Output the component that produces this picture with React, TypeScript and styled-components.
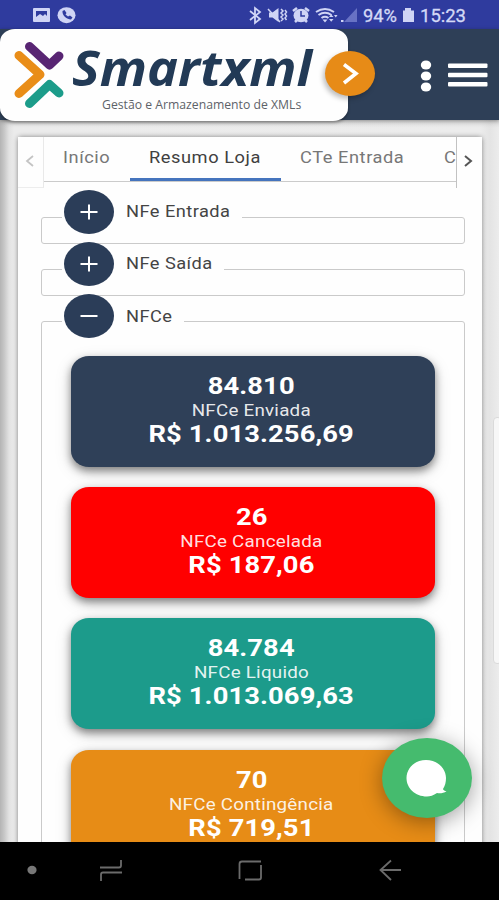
import React from "react";
import styled, { createGlobalStyle } from "styled-components";

const GlobalStyle = createGlobalStyle`
  * { box-sizing: border-box; }
  body { margin: 0; background: #000; font-family: Roboto, "Liberation Sans", sans-serif; }
`;

const Screen = styled.div`
  width: 499px;
  height: 900px;
  overflow: hidden;
  position: relative;
  display: flex;
  flex-direction: column;
`;

const Wide = styled.span<{ $scale?: number; $origin?: string }>`
  display: inline-block;
  white-space: nowrap;
  transform: scaleX(${(p) => p.$scale ?? 1.139});
  transform-origin: ${(p) => p.$origin ?? "left"} center;
`;

const StatusBar = styled.div`
  flex: none;
  height: 29px;
  background: #2f3b9e;
`;

const Header = styled.header`
  flex: none;
  height: 91px;
  background: #2e3f57;
  display: flex;
  align-items: flex-start;
  position: relative;
  z-index: 2;
  box-shadow: 0 1px 4px rgba(0, 0, 0, 0.35);
`;

const LogoPanel = styled.div`
  width: 348px;
  height: 92px;
  background: #fefefe;
  border-radius: 15px / 13px;
  position: relative;
  display: flex;
  box-shadow: 0 2px 3px rgba(0, 0, 0, 0.3);
`;

const Mark = styled.svg`
  flex: none;
  width: 72px;
  height: 92px;
`;

const Brand = styled.div`
  display: flex;
  flex-direction: column;
`;

const BrandName = styled.div`
  margin-top: 15px;
  height: 52px;
  font: italic 700 47.5px/48px "Open Sans", "Noto Sans", sans-serif;
  color: #223a56;
`;

const Tagline = styled.div`
  padding-left: 30px;
  font: 400 12px/18px "Open Sans", "Noto Sans", sans-serif;
  color: #5d6268;
`;

const NextButton = styled.button`
  position: absolute;
  left: 325px;
  top: 22px;
  width: 50px;
  height: 45px;
  padding: 0;
  border: 0;
  border-radius: 50%;
  background: #e78b17;
  box-shadow: -2px 3px 5px rgba(0, 0, 0, 0.25);
`;

const HeaderActions = styled.div`
  flex: 1;
  height: 91px;
  display: flex;
  justify-content: flex-end;
  align-items: center;
  padding-right: 11px;
`;

const Page = styled.main`
  flex: none;
  height: 722px;
  overflow: hidden;
  position: relative;
  padding: 16.5px 17px 0 18px;
  background:
    linear-gradient(180deg, rgba(180, 180, 180, 0.35), rgba(255, 255, 255, 0) 8px),
    linear-gradient(90deg, #b4b4b4 0, #c6c6c6 4px, #e2e2e2 9px, #ebebeb 14px, #ececec 480px, #e4e4e4 490px, #ececec 499px);
`;

const ScrollThumb = styled.div`
  position: absolute;
  right: -3px;
  top: 297px;
  width: 9px;
  height: 247px;
  border: 1px solid #dadada;
  border-radius: 4px;
  background: #f7f7f7;
`;

const Panel = styled.section`
  height: 760px;
  background: #fefefe;
  border-radius: 3px;
  box-shadow: 0 0 5px rgba(0, 0, 0, 0.45);
  display: flex;
  flex-direction: column;
`;

const Tabs = styled.nav`
  flex: none;
  height: 51px;
  display: flex;
  align-items: flex-start;
`;

const TabArrow = styled.button<{ $side: "left" | "right" }>`
  flex: none;
  width: 26px;
  height: 51px;
  padding: 0;
  border: 0;
  background: #fefefe;
  ${(p) =>
    p.$side === "left"
      ? "border-right: 1px solid #e9e9e9; border-bottom: 1px solid #ededed;"
      : "border-left: 1px solid #c2c2c2;"}
`;

const TabStrip = styled.div`
  flex: 1;
  min-width: 0;
  height: 45px;
  overflow: hidden;
  display: flex;
  border-bottom: 1px solid #cbcbcb;
`;

const Tab = styled.div<{ $width: number; $active?: boolean }>`
  flex: none;
  width: ${(p) => p.$width}px;
  padding: 11px 0 0 19px;
  font-size: 16px;
  line-height: 20px;
  letter-spacing: 0.5px;
  color: ${(p) => (p.$active ? "#404040" : "#777")};
  border-bottom: 3px solid ${(p) => (p.$active ? "#4574bd" : "transparent")};
`;

const Groups = styled.div`
  padding: 29px 17px 0 23px;
  display: flex;
  flex-direction: column;
  gap: 25.4px;
`;

const Group = styled.div<{ $height: number }>`
  flex: none;
  position: relative;
  height: ${(p) => p.$height}px;
  border: 1.5px solid #cacaca;
  border-radius: 3px;
`;

const Legend = styled.div<{ $width: number }>`
  position: absolute;
  left: 20px;
  top: -16px;
  width: ${(p) => p.$width}px;
  height: 20px;
  background: #fefefe;
  display: flex;
  align-items: center;
  gap: 12px;
  padding-left: 2px;
  font-size: 16px;
  letter-spacing: 0.4px;
  color: #444;
`;

const Toggle = styled.button`
  flex: none;
  width: 50px;
  height: 44px;
  padding: 0;
  border: 0;
  border-radius: 50%;
  background: #2b3d58;
`;

const Cards = styled.div`
  padding: 33.5px 29px 0 29px;
  display: flex;
  flex-direction: column;
  gap: 20.3px;
`;

const Card = styled.article<{ $color: string }>`
  flex: none;
  height: 111px;
  border-radius: 18px / 16px;
  background: ${(p) => p.$color};
  box-shadow: 0 4px 8px rgba(0, 0, 0, 0.45), 0 5px 18px rgba(0, 0, 0, 0.12);
  color: #fff;
  display: flex;
  flex-direction: column;
  align-items: center;
  padding: 18px 0 0 0;
`;

const Figure = styled.div`
  font-size: 24px;
  font-weight: 700;
  line-height: 24px;
  letter-spacing: 0.1px;
`;

const Caption = styled.div`
  padding-top: 1px;
  font-size: 16.5px;
  line-height: 23px;
  letter-spacing: 0.2px;
  color: rgba(255, 255, 255, 0.9);
`;

const CardText = styled.div`
  display: flex;
  flex-direction: column;
  align-items: center;
  padding-right: 3px;
`;

const ChatButton = styled.button`
  position: absolute;
  left: 382px;
  top: 738px;
  z-index: 3;
  width: 90px;
  height: 80px;
  padding: 0;
  border: 0;
  border-radius: 50%;
  background: #45bb6e;
  box-shadow: 0 4px 22px rgba(0, 0, 0, 0.38);
`;

const NavBar = styled.footer`
  flex: none;
  height: 58px;
  background: #000;
  position: relative;
  z-index: 4;
`;

const Art = styled.svg`
  display: block;
`;

const StatusIcons = () => (
  <Art width="499" height="29" viewBox="0 0 499 29" fill="#cfd4f5">
    <rect x="33" y="8" width="17" height="14" rx="1" />
    <path d="M36 11h11v5l-2-2-2 2-3-2-4 3z" fill="#2f3b9e" />
    <ellipse cx="66.500" cy="15.200" rx="9" ry="8" />
    <path d="M62.500 11l2-1 2 3-1 1.500 2.500 2 2-1 2.500 2-1.500 2c-4 0-9-4-8.500-8.500z" fill="#2f3b9e" />
    <path d="M250 11l10 8-5 4V8l5 4-10 8" fill="none" stroke="#cfd4f5" strokeWidth="1.800" />
    <path d="M269 12.500h3.500l6-4.500v14l-6-4.500H269z" />
    <path d="M268 9l12 13M281 9l2 2-2 2 2 2-2 2 2 2-2 2M285 10l1.500 2-1.500 2 1.500 2-1.500 2 1.500 2" fill="none" stroke="#cfd4f5" strokeWidth="1.500" />
    <ellipse cx="301" cy="15.500" rx="7.500" ry="6.700" />
    <path d="M293 11l4-3M309 11l-4-3M295 22l2-2M307 22l-2-2" stroke="#cfd4f5" strokeWidth="2.500" />
    <path d="M301 11v5h4" fill="none" stroke="#2f3b9e" strokeWidth="1.500" />
    <path d="M316 12q9-6 18 0M318.500 15q6.500-4.500 13 0M321.500 18q3.500-2.500 7 0" fill="none" stroke="#cfd4f5" strokeWidth="2" />
    <path d="M322.500 19.500h5l-2.500 3zM329 17l2.200-2.500 2.300 2.500zM329 19h4.500l-2.300 2.700zM334 15h3.500l-1.700 2.500zM341 20h2.500v2H341z" />
    <path d="M357 8v14h-13z" fill="#6872c4" />
    <path d="M405 8h6v2.500h3V22h-11V10.500h2z" />
    <g fontFamily="Roboto, sans-serif" fontSize="17.500" fill="#d4d9f6" stroke="#d4d9f6" strokeWidth="0.300">
      <text x="363" y="21.500" textLength="34" lengthAdjust="spacingAndGlyphs">94%</text>
      <text x="420" y="21.500" textLength="46" lengthAdjust="spacingAndGlyphs">15:23</text>
    </g>
  </Art>
);

const LogoMark = () => (
  <Mark viewBox="0 0 72 92" fill="none" strokeWidth="9" strokeLinecap="round" strokeLinejoin="round">
    <path d="M29.500 17.500L49.500 36 59 27" stroke="#582573" />
    <path d="M19 26.500L40 45.500 19 64.500" stroke="#e98d18" />
    <path d="M29.500 74.500L49.500 55.500 59 64" stroke="#1c9c8a" />
  </Mark>
);

const HeaderIcons = () => (
  <Art width="70" height="40" viewBox="0 0 70 40" fill="#fff">
    <ellipse cx="8" cy="10" rx="5.200" ry="4.600" />
    <ellipse cx="8" cy="21" rx="5.200" ry="4.600" />
    <ellipse cx="8" cy="32" rx="5.200" ry="4.600" />
    <rect x="30" y="8.500" width="39.500" height="4.400" rx="1" />
    <rect x="30" y="17.800" width="39.500" height="4.400" rx="1" />
    <rect x="30" y="27" width="39.500" height="4.400" rx="1" />
  </Art>
);

const ToggleIcon = ({ open }: { open: boolean }) => (
  <Art width="50" height="44" viewBox="0 0 50 44" fill="none" stroke="#fff" strokeWidth="2">
    <path d={open ? "M16.500 22h17" : "M16.500 22h17M25 14.500v15"} />
  </Art>
);

const NavIcons = () => (
  <Art width="499" height="58" viewBox="0 0 499 58" fill="none" stroke="#6b6b6b" strokeWidth="1.800">
    <ellipse cx="32" cy="28" rx="4.600" ry="4.200" fill="#777" stroke="none" />
    <path d="M100 25.500h19q2 0 2-2V18M122 30.500h-19q-2 0-2 2V39" />
    <path d="M245 37.500h14q2 0 2-2V23" />
    <path d="M239.500 37V22q0-2.500 2.500-2.500h19" />
    <path d="M401 28h-20M391 18.500L380.500 28 391 38" />
  </Art>
);

const cards = [
  { color: "#2f4058", count: "84.810", label: "NFCe Enviada", total: "R$ 1.013.256,69" },
  { color: "#ff0000", count: "26", label: "NFCe Cancelada", total: "R$ 187,06" },
  { color: "#1c9b8b", count: "84.784", label: "NFCe Liquido", total: "R$ 1.013.069,63" },
  { color: "#e78c16", count: "70", label: "NFCe Contingência", total: "R$ 719,51" },
];

const tabs = [
  { label: "Início", width: 86 },
  { label: "Resumo Loja", width: 151, active: true },
  { label: "CTe Entrada", width: 143.5 },
  { label: "C", width: 140 },
];

const groups = [
  { label: "NFe Entrada", height: 27, legend: 180, open: false },
  { label: "NFe Saída", height: 27, legend: 162, open: false },
  { label: "NFCe", height: 600, legend: 122, open: true },
];

export default function App() {
  return (
    <Screen>
      <GlobalStyle />
      <StatusBar>
        <StatusIcons />
      </StatusBar>
      <Header>
        <LogoPanel>
          <LogoMark />
          <Brand>
            <BrandName>
              <Wide $scale={1.1}>Smartxml</Wide>
            </BrandName>
            <Tagline>
              <Wide $scale={1.018}>Gestão e Armazenamento de XMLs</Wide>
            </Tagline>
          </Brand>
        </LogoPanel>
        <NextButton aria-label="Avançar">
          <Art width="50" height="45" viewBox="0 0 50 45" fill="none" stroke="#fff" strokeWidth="3.600">
            <path d="M19 13.500l12 9-12 9.500" />
          </Art>
        </NextButton>
        <HeaderActions>
          <HeaderIcons />
        </HeaderActions>
      </Header>
      <Page>
        <Panel>
          <Tabs>
            <TabArrow $side="left" aria-label="Anterior">
              <Art width="25" height="50" viewBox="0 0 25 50" fill="none" stroke="#c4c4c4" strokeWidth="1.800">
                <path d="M15 19l-6 5 6 5" />
              </Art>
            </TabArrow>
            <TabStrip>
              {tabs.map((t) => (
                <Tab key={t.label} $width={t.width} $active={t.active}>
                  <Wide>{t.label}</Wide>
                </Tab>
              ))}
            </TabStrip>
            <TabArrow $side="right" aria-label="Próximo">
              <Art width="25" height="51" viewBox="0 0 25 51" fill="none" stroke="#555" strokeWidth="2">
                <path d="M8 19l6 5-6 5" />
              </Art>
            </TabArrow>
          </Tabs>
          <Groups>
            {groups.map((g) => (
              <Group key={g.label} $height={g.height}>
                <Legend $width={g.legend}>
                  <Toggle aria-label={g.label}>
                    <ToggleIcon open={g.open} />
                  </Toggle>
                  <Wide>{g.label}</Wide>
                </Legend>
                {g.open && (
                  <Cards>
                    {cards.map((c) => (
                      <Card key={c.label} $color={c.color}>
                        <CardText>
                          <Figure>
                            <Wide $origin="center">{c.count}</Wide>
                          </Figure>
                          <Caption>
                            <Wide $origin="center">{c.label}</Wide>
                          </Caption>
                          <Figure>
                            <Wide $origin="center">{c.total}</Wide>
                          </Figure>
                        </CardText>
                      </Card>
                    ))}
                  </Cards>
                )}
              </Group>
            ))}
          </Groups>
        </Panel>
        <ScrollThumb />
      </Page>
      <ChatButton aria-label="Chat">
        <Art width="90" height="80" viewBox="0 0 90 80" fill="#fff">
          <path d="M44 22c11 0 20 8 20 18 0 4-1 8-3 11 0 1 2 2 3.500 2.300-3 2-7 2.500-9.500 1.700C51.500 57.500 48 58.500 45 58.500 33 58.500 24.500 50 24.500 40S33 22 44 22z" />
        </Art>
      </ChatButton>
      <NavBar>
        <NavIcons />
      </NavBar>
    </Screen>
  );
}
